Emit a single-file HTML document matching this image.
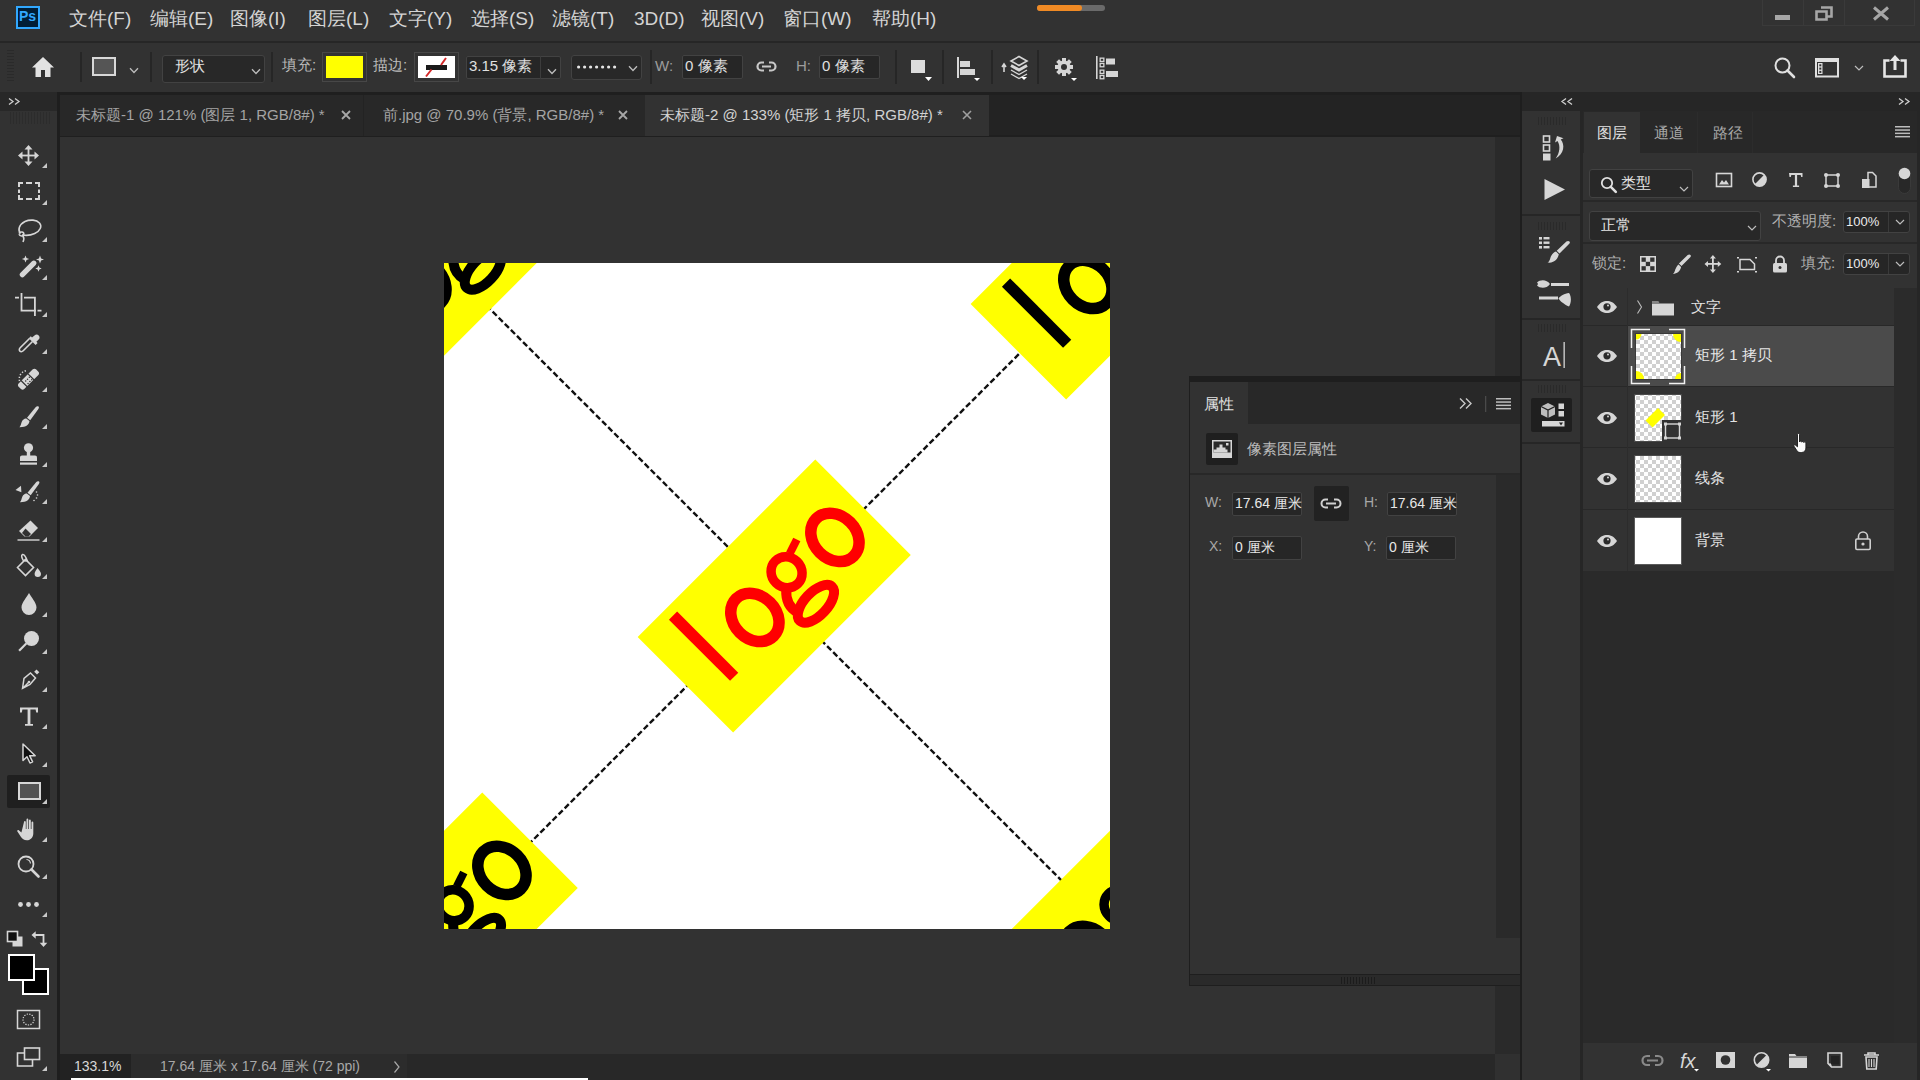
<!DOCTYPE html>
<html><head><meta charset="utf-8">
<style>
*{box-sizing:border-box;margin:0;padding:0}
html,body{width:1920px;height:1080px;overflow:hidden;background:#323232;font-family:"Liberation Sans",sans-serif;color:#d4d4d4}
.a{position:absolute}
.menu{font-size:19px;color:#d4d4d4;top:6px;white-space:nowrap}
.lbl{font-size:15px;color:#b8b8b8;white-space:nowrap}
.fld{background:#262626;border:1px solid #424242;border-radius:2px}
.sep{width:2px;background:#262626}
svg{position:absolute;overflow:visible}
</style></head><body>
<!-- MENU BAR -->
<div class="a" style="left:0;top:0;width:1920px;height:41px;background:#323232"></div>
<div class="a" style="left:0;top:41px;width:1920px;height:2px;background:#262626"></div>
<div class="a" style="left:16px;top:6px;width:24px;height:23px;background:#001e36;border:2px solid #31a8ff"></div>
<div class="a" style="left:19px;top:8px;font-size:14px;font-weight:bold;color:#31a8ff">Ps</div>
<div class="a menu" style="left:69px">文件(F)</div>
<div class="a menu" style="left:150px">编辑(E)</div>
<div class="a menu" style="left:230px">图像(I)</div>
<div class="a menu" style="left:308px">图层(L)</div>
<div class="a menu" style="left:389px">文字(Y)</div>
<div class="a menu" style="left:471px">选择(S)</div>
<div class="a menu" style="left:552px">滤镜(T)</div>
<div class="a menu" style="left:634px;top:8px">3D(D)</div>
<div class="a menu" style="left:701px">视图(V)</div>
<div class="a menu" style="left:783px">窗口(W)</div>
<div class="a menu" style="left:872px">帮助(H)</div>
<div class="a" style="left:1037px;top:5px;width:68px;height:6px;border-radius:3px;background:#6a6a6a"></div>
<div class="a" style="left:1037px;top:5px;width:45px;height:6px;border-radius:3px;background:#f08a24"></div>

<!-- OPTIONS BAR -->
<div class="a" style="left:0;top:43px;width:1920px;height:49px;background:#323232"></div>

<!-- window controls -->
<div class="a" style="left:1762px;top:0;width:153px;height:26px;border:1px solid #3a3a3a;border-top:none"></div>
<div class="a" style="left:1803px;top:0;width:1px;height:26px;background:#3a3a3a"></div>
<div class="a" style="left:1844px;top:0;width:1px;height:26px;background:#3a3a3a"></div>
<div class="a" style="left:1775px;top:15px;width:15px;height:5px;background:#a6a6a6"></div>
<svg style="left:1815px;top:6px" width="18" height="15" viewBox="0 0 18 15"><path d="M6 1.5h10.5v9h-4M1.5 5.5h10v8h-10z" fill="none" stroke="#a6a6a6" stroke-width="2.6"/></svg>
<svg style="left:1873px;top:7px" width="16" height="13" viewBox="0 0 16 13"><path d="M1 0.5L15 12.5M15 0.5L1 12.5" stroke="#a6a6a6" stroke-width="3"/></svg>
<!-- options bar items -->
<svg style="left:7px;top:50px" width="8" height="36" viewBox="0 0 8 36"><g fill="#2a2a2a"><rect x="0" y="0" width="7" height="1"/><rect x="0" y="3" width="7" height="1"/><rect x="0" y="6" width="7" height="1"/><rect x="0" y="9" width="7" height="1"/><rect x="0" y="12" width="7" height="1"/><rect x="0" y="15" width="7" height="1"/><rect x="0" y="18" width="7" height="1"/><rect x="0" y="21" width="7" height="1"/><rect x="0" y="24" width="7" height="1"/><rect x="0" y="27" width="7" height="1"/><rect x="0" y="30" width="7" height="1"/></g></svg>
<svg style="left:31px;top:56px" width="24" height="22" viewBox="0 0 24 22"><path d="M12 1L1 11.5h3.5V21h5.5v-7h4v7h5.5v-9.5H23z" fill="#e2e2e2"/></svg>
<div class="a sep" style="left:80px;top:52px;height:30px"></div>
<div class="a" style="left:92px;top:57px;width:24px;height:19px;border:2px solid #d8d8d8;background:#555"></div>
<svg style="left:129px;top:67px" width="10" height="7" viewBox="0 0 10 7"><path d="M1 1.2L5 5.5L9 1.2" fill="none" stroke="#bdbdbd" stroke-width="1.3"/></svg>
<div class="a sep" style="left:150px;top:52px;height:30px"></div>
<div class="a fld" style="left:162px;top:55px;width:103px;height:28px;border-radius:3px;background:#282828"></div>
<div class="a lbl" style="left:175px;top:57px;color:#e0e0e0">形状</div>
<svg style="left:251px;top:68px" width="10" height="7" viewBox="0 0 10 7"><path d="M1 1.2L5 5.5L9 1.2" fill="none" stroke="#bdbdbd" stroke-width="1.3"/></svg>
<div class="a sep" style="left:271px;top:52px;height:30px"></div>
<div class="a lbl" style="left:282px;top:56px;color:#bcbcbc">填充:</div>
<div class="a" style="left:322px;top:52px;width:45px;height:30px;border:1px solid #474747"></div>
<div class="a" style="left:326px;top:56px;width:37px;height:22px;background:#ffff00"></div>
<div class="a lbl" style="left:373px;top:56px;color:#bcbcbc">描边:</div>
<div class="a" style="left:414px;top:52px;width:45px;height:30px;border:1px solid #474747"></div>
<div class="a" style="left:418px;top:56px;width:37px;height:22px;background:#fff"></div>
<div class="a" style="left:426px;top:65px;width:21px;height:5px;background:#1a1a1a"></div>
<svg style="left:418px;top:56px" width="37" height="22" viewBox="0 0 37 22"><path d="M28 2L23 9M13.5 13.5L8 20.5" stroke="#d32a2a" stroke-width="2"/></svg>
<div class="a fld" style="left:466px;top:56px;width:95px;height:23px;background:#262626"></div>
<div class="a" style="left:540px;top:56px;width:1px;height:23px;background:#3c3c3c"></div>
<div class="a lbl" style="left:469px;top:57px;color:#e0e0e0">3.15 像素</div>
<svg style="left:547px;top:68px" width="10" height="7" viewBox="0 0 10 7"><path d="M1 1.2L5 5.5L9 1.2" fill="none" stroke="#bdbdbd" stroke-width="1.3"/></svg>
<div class="a fld" style="left:571px;top:55px;width:71px;height:25px;border-radius:3px;background:#282828"></div>
<svg style="left:577px;top:65px" width="40" height="4" viewBox="0 0 40 4"><g fill="#e6e6e6"><circle cx="1.6" cy="2" r="1.6"/><circle cx="7.6" cy="2" r="1.6"/><circle cx="13.6" cy="2" r="1.6"/><circle cx="19.6" cy="2" r="1.6"/><circle cx="25.6" cy="2" r="1.6"/><circle cx="31.6" cy="2" r="1.6"/><circle cx="37.6" cy="2" r="1.6"/></g></svg>
<svg style="left:628px;top:65px" width="10" height="7" viewBox="0 0 10 7"><path d="M1 1.2L5 5.5L9 1.2" fill="none" stroke="#bdbdbd" stroke-width="1.3"/></svg>
<div class="a sep" style="left:650px;top:50px;height:34px"></div>
<div class="a lbl" style="left:655px;top:57px;color:#9c9c9c">W:</div>
<div class="a fld" style="left:682px;top:55px;width:61px;height:24px;background:#262626"></div>
<div class="a lbl" style="left:685px;top:57px;color:#e0e0e0">0 像素</div>
<svg style="left:756px;top:60px" width="21" height="13" viewBox="0 0 21 13"><path d="M8 2.5H5.5a4 4 0 0 0 0 8H8M13 2.5h2.5a4 4 0 0 1 0 8H13M6 6.5h9" fill="none" stroke="#c8c8c8" stroke-width="2.2"/></svg>
<div class="a lbl" style="left:796px;top:57px;color:#9c9c9c">H:</div>
<div class="a fld" style="left:819px;top:55px;width:61px;height:24px;background:#262626"></div>
<div class="a lbl" style="left:822px;top:57px;color:#e0e0e0">0 像素</div>
<div class="a sep" style="left:895px;top:50px;height:34px"></div>
<div class="a" style="left:911px;top:60px;width:14px;height:13px;background:#dcdcdc"></div>
<svg style="left:925px;top:77px" width="7" height="4" viewBox="0 0 7 4"><path d="M0 0h7L3.5 4z" fill="#fff"/></svg>
<div class="a sep" style="left:942px;top:50px;height:34px"></div>
<svg style="left:956px;top:56px" width="26" height="26" viewBox="0 0 26 26"><rect x="1" y="1" width="2" height="21" fill="#d6d6d6"/><rect x="4" y="5" width="10" height="6" fill="#d6d6d6"/><rect x="4" y="13" width="15" height="6" fill="#d6d6d6"/><path d="M18 22h6l-3 3z" fill="#fff"/></svg>
<div class="a sep" style="left:991px;top:50px;height:34px"></div>
<svg style="left:1000px;top:55px" width="30" height="26" viewBox="0 0 30 26"><path d="M4 17V10M2 12l2-3 2 3" fill="none" stroke="#d6d6d6" stroke-width="1.6"/><path d="M19 1.5l8 4.5-8 4.5-8-4.5z" fill="none" stroke="#d6d6d6" stroke-width="1.6"/><path d="M11 10.5l8 4.5 8-4.5" fill="none" stroke="#d6d6d6" stroke-width="3"/><path d="M11 15l8 4.5 8-4.5M11 19l8 4.5 8-4.5" fill="none" stroke="#d6d6d6" stroke-width="1.4"/><path d="M21 22h6l-3 3z" fill="#fff"/></svg>
<div class="a sep" style="left:1037px;top:50px;height:34px"></div>
<svg style="left:1054px;top:57px" width="25" height="25" viewBox="0 0 25 25"><g fill="#d6d6d6"><circle cx="10" cy="10" r="6.5"/><rect x="8" y="1" width="4" height="18"/><rect x="1" y="8" width="18" height="4"/><rect x="8" y="1" width="4" height="18" transform="rotate(45 10 10)"/><rect x="8" y="1" width="4" height="18" transform="rotate(-45 10 10)"/></g><circle cx="10" cy="10" r="3" fill="#323232"/><path d="M17 21h6l-3 3z" fill="#fff"/></svg>
<svg style="left:1095px;top:56px" width="24" height="24" viewBox="0 0 24 24"><g fill="#d6d6d6"><rect x="1" y="0" width="1.6" height="23"/><rect x="4.5" y="1.5" width="5" height="4.6"/><rect x="4.5" y="6.8" width="5" height="4.6"/><rect x="4.5" y="13.5" width="5" height="4.6"/><rect x="4.5" y="18.8" width="5" height="4.6"/><rect x="11" y="2.5" width="9" height="6"/><rect x="11" y="15" width="12" height="6"/></g><g fill="#323232"><rect x="5.8" y="2.8" width="2.4" height="2"/><rect x="5.8" y="8.1" width="2.4" height="2"/><rect x="5.8" y="14.8" width="2.4" height="2"/><rect x="5.8" y="20.1" width="2.4" height="2"/></g></svg>
<svg style="left:1774px;top:57px" width="22" height="22" viewBox="0 0 22 22"><circle cx="8.5" cy="8.5" r="7" fill="none" stroke="#e0e0e0" stroke-width="2"/><path d="M13.5 13.5L20 20" stroke="#e0e0e0" stroke-width="2.6" stroke-linecap="round"/></svg>
<svg style="left:1815px;top:58px" width="24" height="20" viewBox="0 0 24 20"><rect x="1" y="1" width="22" height="17.5" fill="none" stroke="#e0e0e0" stroke-width="2"/><rect x="2" y="2" width="20" height="2" fill="#e0e0e0"/><rect x="3" y="5" width="4.5" height="11" fill="#e0e0e0"/><g fill="#323232"><rect x="4.3" y="6.3" width="2" height="2"/><rect x="4.3" y="9.6" width="2" height="2"/><rect x="4.3" y="12.9" width="2" height="2"/></g></svg>
<svg style="left:1854px;top:65px" width="10" height="6" viewBox="0 0 10 6"><path d="M1 1L5 5L9 1" fill="none" stroke="#bdbdbd" stroke-width="1.2"/></svg>
<svg style="left:1883px;top:54px" width="24" height="24" viewBox="0 0 24 24"><path d="M6.5 6.5H1.5v16h21v-16h-5" fill="none" stroke="#e6e6e6" stroke-width="2.6"/><path d="M12 16V4" stroke="#e6e6e6" stroke-width="3"/><path d="M6.5 7L12 1l5.5 6z" fill="#e6e6e6"/></svg>
<!-- LEFT TOOLBAR -->
<div class="a" style="left:0;top:92px;width:57px;height:988px;background:#323232"></div>
<div class="a" style="left:0;top:92px;width:57px;height:19px;background:#282828"></div>
<div class="a" style="left:57px;top:92px;width:3px;height:988px;background:#1e1e1e"></div>

<svg style="left:0;top:0" width="60" height="1080" viewBox="0 0 60 1080">
<g fill="none" stroke="#cfcfcf" stroke-width="1.3"><path d="M9 98.5l4 3-4 3M15 98.5l4 3-4 3"/></g>
<g fill="#2c2c2c"><rect x="10" y="112" width="1" height="12"/><rect x="13" y="112" width="1" height="12"/><rect x="16" y="112" width="1" height="12"/><rect x="19" y="112" width="1" height="12"/><rect x="22" y="112" width="1" height="12"/><rect x="25" y="112" width="1" height="12"/><rect x="28" y="112" width="1" height="12"/><rect x="31" y="112" width="1" height="12"/><rect x="34" y="112" width="1" height="12"/><rect x="37" y="112" width="1" height="12"/><rect x="40" y="112" width="1" height="12"/><rect x="43" y="112" width="1" height="12"/><rect x="46" y="112" width="1" height="12"/><rect x="49" y="112" width="1" height="12"/></g>
<g fill="#d6d6d6" stroke="none">
<!-- move -->
<rect x="21" y="154.6" width="15" height="1.8"/><rect x="27.6" y="148" width="1.8" height="15"/>
<path d="M28.5 145l4 4.5h-8zM28.5 166l4-4.5h-8zM18 155.5l4.5-4v8zM39 155.5l-4.5-4v8z"/>
<!-- marquee -->
<path d="M18 182h5v2h-3v3h-2zM40 182h-5v2h3v3h2zM18 200h5v-2h-3v-3h-2zM40 200h-5v-2h3v-3h2zM26 182h6v2h-6zM26 198h6v2h-6zM18 189.5h2v3.5h-2zM38 189.5h2v3.5h-2z"/>
<!-- wand -->
<path d="M20.5 276.5a2.6 2.6 0 0 1 0-3.7l11.5-11.5a2.6 2.6 0 0 1 3.7 3.7l-11.5 11.5a2.6 2.6 0 0 1-3.7 0z"/>
<path d="M25.5 255.4L26.508 257.992L29.1 259L26.508 260.008L25.5 262.6L24.492 260.008L21.9 259L24.492 257.992zM40 255.5L41.12 258.38L44 259.5L41.12 260.62L40 263.5L38.88 260.62L36 259.5L38.88 258.38zM38.5 265.3L39.396 267.604L41.7 268.5L39.396 269.396L38.5 271.7L37.604 269.396L35.3 268.5L37.604 267.604z"/>
<!-- crop -->
<path d="M20.6 293h1.8v16.8h13.6v1.6h-15.4zM15 296.8h4v1.6h-4zM24 296.8h11.8v19.2h-1.8v-17.6h-10zM37.5 309.8h4v1.6h-4z"/>
<!-- brush -->
<path d="M38.5 406.5c.8.6.3 1.8-.3 2.7l-8 11-3.2-2.4 8.6-10.6c.8-.9 2.1-1.3 2.9-.7z"/>
<path d="M26.3 418.6l3.2 2.4c-.4 3.5-3.3 6.3-10 6.2 1.6-1.6 1.4-3.8 2.4-5.6 1-1.9 2.7-3.4 4.4-3z"/>
<!-- stamp -->
<circle cx="28.5" cy="447.8" r="4.6"/><rect x="26.8" y="450" width="3.4" height="6"/>
<path d="M20 457.5c0-1.2.8-2 2-2h13c1.2 0 2 .8 2 2v3.5h-17z"/><rect x="20" y="462.5" width="17" height="2.2"/>
<!-- history brush -->
<path d="M39 481.5c.8.6.3 1.8-.3 2.7l-8 11-3.2-2.4 8.6-10.6c.8-.9 2.1-1.3 2.9-.7z"/>
<path d="M26.8 493.6l3.2 2.4c-.4 3.5-3.3 6.3-10 6.2 1.6-1.6 1.4-3.8 2.4-5.6 1-1.9 2.7-3.4 4.4-3z"/>
<path d="M15.5 490l5.5-4.2.4 6.5z"/>
<circle cx="36.5" cy="492" r=".8"/><circle cx="37.5" cy="495" r=".8"/><circle cx="36.5" cy="498" r=".8"/><circle cx="34" cy="500.5" r=".8"/>
<!-- eraser -->
<path d="M30.5 520.5l7.5 7.5-8.5 8.5h-5l-5.5-5.5z"/>
<!-- drop -->
<path d="M29 593c2 4 7.5 9.5 7.5 14.5a7.5 7.5 0 0 1-15 0c0-5 5.5-10.5 7.5-14.5z"/>
<!-- dodge -->
<circle cx="31.5" cy="638.5" r="7.5"/>
<!-- path select -->

<!-- hand -->
<path d="M24 822c0-1.2 1.8-1.2 1.8 0v7h.7v-9.5c0-1.2 1.8-1.2 1.8 0v9.5h.7v-8.5c0-1.2 1.8-1.2 1.8 0v8.5h.7v-6.5c0-1.2 1.8-1.2 1.8 0v11c0 3.5-2.5 6.8-6.5 6.8-2.8 0-4.5-1.5-5.8-3.3l-3.6-5.5c-.7-1 .5-2 1.4-1.2l2.6 2.3z"/>
<!-- dots -->
<circle cx="20.5" cy="904.5" r="2.4"/><circle cx="28.5" cy="904.5" r="2.4"/><circle cx="36.5" cy="904.5" r="2.4"/>
</g>
<g fill="none" stroke="#d6d6d6" stroke-width="1.6">
<!-- lasso -->
<path d="M20.5 233.5C17.5 230 19 224.5 25 221.5c5-2.3 11.5-1.8 14.5 1.5 2.8 3.2.8 8-4.8 10.5-4 1.8-9 2.2-12.5 1.3"/>
<path d="M19 233.5c1.3-2.4 5-1.8 4.8.6-.2 2.3-4 2.5-4.8.2M22.8 235.5c1.2 1.8 1.4 4 .2 6.5"/>
<!-- eyedropper -->
<path d="M29.5 338.5l-9.3 9.3c-1.3 1.3-1 2.6-.3 3.3.7.7 2 1 3.3-.3l9.3-9.3"/>
<!-- heal dots -->
<path d="M19.5 381A8.5 8.5 0 0 1 27.5 370.5" stroke-dasharray="1.3 1.7" stroke-width="1.5"/>
<!-- bucket -->
<path d="M17.5 567.5l8-8 8 8-8 8z"/><path d="M24 561.5c-2.5-3.5-3-6.5-1.5-7s3.5 2.5 5 7"/>
<!-- dodge handle -->
<path d="M26.3 643.5l-7.2 7.2" stroke-width="2.2"/>
<!-- pen -->
<path d="M22.5 688.5l1.5-10 6.5-5.5 5 5-5.5 6.5zM22.8 688.2l6.2-6.2" stroke-width="1.5"/>
<!-- zoom -->
<circle cx="26" cy="864" r="7.5" stroke-width="1.8"/><path d="M31.5 869.5l7 7" stroke-width="2.6" stroke-linecap="round"/><path d="M26.5 859.5a4.5 4.5 0 0 1 4 4" stroke-width="1.2"/>
<!-- rect tool -->
<!-- swap arrows -->
<path d="M35 935h8.5v8" stroke-width="1.8"/>
<!-- quick mask -->
<rect x="17.5" y="1010.5" width="22" height="18" stroke-width="1.5"/>
<circle cx="28.5" cy="1019.5" r="5.5" stroke-width="1.2" stroke-dasharray="1.3 1.3"/>
<!-- screen mode -->
<rect x="24.5" y="1048" width="15" height="11.5" stroke-width="1.6"/><path d="M24.5 1053h-7v13h15v-6.5" stroke-width="1.6"/>
</g>
<g fill="#d6d6d6">
<path d="M34.5 335.5c1.2-1.2 3-1.3 4.2-.1 1.2 1.2 1.1 3-.1 4.2l-2.2 2.2 1.2 1.2-2 2-6.8-6.8 2-2 1.2 1.2z"/>
<path d="M38.4 371.7c.9.9.9 2.3 0 3.2l-14.2 14.2c-.9.9-2.3.9-3.2 0l-2.4-2.4c-.9-.9-.9-2.3 0-3.2l14.2-14.2c.9-.9 2.3-.9 3.2 0z"/>
<circle cx="25.5" cy="560.5" r="1.3"/><path d="M37.5 568c1.5 1.8 3.5 4 3.5 5.8a3.2 3.2 0 0 1-6.4 0c0-1.4 1.5-3.8 2.9-5.8z"/>
<path d="M36.5 669.5l2.8 2.8-2.3 2.3-2.8-2.8z"/>
<path d="M20 707.5h18v5h-1.8l-.6-3h-5.2v14.5h2.6v1.8h-8v-1.8h2.6v-14.5h-5.2l-.6 3h-1.8z"/>
<path d="M43.5 947l-3.8-4.2h7.6z"/><path d="M31.5 935l4.2-3.8v7.6z"/>
</g>
<g fill="#323232"><circle cx="25.66" cy="381.04" r="0.75"/><circle cx="28.06" cy="383.44" r="0.75"/><circle cx="27.50" cy="379.20" r="0.75"/><circle cx="29.90" cy="381.60" r="0.75"/><circle cx="29.34" cy="377.36" r="0.75"/><circle cx="31.74" cy="379.76" r="0.75"/>
<path d="M25.5 528.5l5.5 5.5-2.5 2.5h-3l-3.5-3.5z"/><path d="M28.2 373.2l7.4 7.4-.9.9-7.4-7.4zM21.4 380l7.4 7.4-.9.9-7.4-7.4z"/><path d="M28 685.5l.1-.1"/></g>
<path d="M17.5 540h22" stroke="#d6d6d6" stroke-width="1.4"/>
<path d="M19.5 533l3.5 3.5" stroke="#d6d6d6" stroke-width="0"/>
<circle cx="29" cy="682" r="1.3" fill="#d6d6d6"/>
<path d="M23 744v16.5l4-3.8 3 6.3 2.6-1.1-3-6.2h5.6z" fill="#111" stroke="#d6d6d6" stroke-width="1.5" stroke-linejoin="round"/>
<!-- rect tool selected -->
<rect x="7" y="775" width="43" height="33" rx="2" fill="#1f1f1f"/>
<rect x="19" y="783" width="21" height="16" fill="#535353" stroke="#d6d6d6" stroke-width="2"/>
<!-- default colors -->
<rect x="12.5" y="936.5" width="10" height="10" fill="#d6d6d6"/>
<rect x="7.5" y="931.5" width="10" height="10" fill="#111" stroke="#d6d6d6" stroke-width="1.6"/>
<!-- fg/bg -->
<rect x="23" y="969" width="25" height="25" fill="#000" stroke="#fff" stroke-width="2"/>
<rect x="9" y="955" width="25" height="25" fill="#000" stroke="#fff" stroke-width="2"/>
<g fill="#c8c8c8">
<path d="M47 163v5h-5z" fill="#c8c8c8"/><path d="M47 200v5h-5z" fill="#c8c8c8"/><path d="M47 237v5h-5z" fill="#c8c8c8"/><path d="M47 275v5h-5z" fill="#c8c8c8"/><path d="M47 312v5h-5z" fill="#c8c8c8"/><path d="M47 349v5h-5z" fill="#c8c8c8"/><path d="M47 387v5h-5z" fill="#c8c8c8"/><path d="M47 424v5h-5z" fill="#c8c8c8"/><path d="M47 462v5h-5z" fill="#c8c8c8"/><path d="M47 499v5h-5z" fill="#c8c8c8"/><path d="M47 537v5h-5z" fill="#c8c8c8"/><path d="M47 574v5h-5z" fill="#c8c8c8"/><path d="M47 612v5h-5z" fill="#c8c8c8"/><path d="M47 649v5h-5z" fill="#c8c8c8"/><path d="M47 687v5h-5z" fill="#c8c8c8"/><path d="M47 724v5h-5z" fill="#c8c8c8"/><path d="M47 762v5h-5z" fill="#c8c8c8"/><path d="M47 799v5h-5z" fill="#c8c8c8"/><path d="M47 837v5h-5z" fill="#c8c8c8"/><path d="M47 874v5h-5z" fill="#c8c8c8"/><path d="M47 912v5h-5z" fill="#c8c8c8"/><path d="M47 1066v5h-5z" fill="#c8c8c8"/>
</g>
</svg>
<!-- DOCUMENT AREA -->
<div class="a" style="left:60px;top:92px;width:1460px;height:45px;background:#232323;border-top:3px solid #1f1f1f;border-bottom:2px solid #1f1f1f"></div>
<div class="a" style="left:60px;top:95px;width:303px;height:41px;background:#282828"></div>
<div class="a" style="left:363px;top:95px;width:282px;height:41px;background:#282828;border-left:1px solid #232323"></div>
<div class="a" style="left:645px;top:95px;width:344px;height:41px;background:#323232"></div>
<div class="a lbl" style="left:76px;top:106px;color:#a4a4a4">未标题-1 @ 121% (图层 1, RGB/8#) *</div>
<div class="a lbl" style="left:383px;top:106px;color:#a4a4a4">前.jpg @ 70.9% (背景, RGB/8#) *</div>
<div class="a lbl" style="left:660px;top:106px;color:#d2d2d2">未标题-2 @ 133% (矩形 1 拷贝, RGB/8#) *</div>
<svg style="left:341px;top:110px" width="10" height="10" viewBox="0 0 10 10"><path d="M1 1L9 9M9 1L1 9" stroke="#a8a8a8" stroke-width="1.8"/></svg>
<svg style="left:618px;top:110px" width="10" height="10" viewBox="0 0 10 10"><path d="M1 1L9 9M9 1L1 9" stroke="#a8a8a8" stroke-width="1.8"/></svg>
<svg style="left:962px;top:110px" width="10" height="10" viewBox="0 0 10 10"><path d="M1 1L9 9M9 1L1 9" stroke="#a0a0a0" stroke-width="1.6"/></svg>
<div class="a" style="left:60px;top:137px;width:1435px;height:917px;background:#323232"></div>
<div class="a" style="left:1495px;top:137px;width:25px;height:917px;background:#2a2a2a"></div>
<div class="a" style="left:1520px;top:92px;width:2px;height:988px;background:#1e1e1e"></div>

<!-- STATUS BAR -->
<div class="a" style="left:60px;top:1054px;width:1460px;height:26px;background:#282828"></div>
<div class="a" style="left:1495px;top:1054px;width:25px;height:26px;background:#303030"></div>
<div class="a" style="left:60px;top:1054px;width:71px;height:26px;background:#222"></div>
<div class="a" style="left:131px;top:1054px;width:276px;height:26px;background:#2c2c2c"></div>
<div class="a" style="left:74px;top:1058px;font-size:14px;color:#d8d8d8">133.1%</div>
<div class="a" style="left:160px;top:1058px;font-size:14px;color:#a8a8a8;white-space:nowrap">17.64 厘米 x 17.64 厘米 (72 ppi)</div>
<div class="a" style="left:71px;top:1078px;width:517px;height:2px;background:#fff"></div>
<svg style="left:393px;top:1060px" width="8" height="14" viewBox="0 0 8 14"><path d="M1.5 1.5L6 7L1.5 12.5" fill="none" stroke="#a8a8a8" stroke-width="1.2"/></svg>

<!-- CANVAS -->
<svg style="left:444px;top:263px;overflow:hidden" width="666" height="666" viewBox="0 0 666 666">
<defs>
<g id="lg">
<rect x="-125.6" y="-67.5" width="251.2" height="135" fill="#ffff00" stroke="none"/>
<rect x="-91.2" y="-57.7" width="11.6" height="86.5" stroke="none"/>
<ellipse cx="-28.8" cy="1.5" rx="21.5" ry="26.5" fill="none" stroke-width="11.5"/>
<ellipse cx="84.4" cy="1.5" rx="21.5" ry="26.5" fill="none" stroke-width="11.5"/>
<ellipse cx="25.5" cy="-8" rx="15" ry="16" fill="none" stroke-width="9.5"/>
<path d="M41 -19 L56 -24" fill="none" stroke-width="8"/>
<ellipse cx="0" cy="0" rx="23.5" ry="11.5" fill="none" stroke-width="10" transform="translate(24 35) rotate(-2)"/>
<path d="M13 4 Q1 15 5 28" fill="none" stroke-width="10"/>
</g>
</defs>
<rect width="666" height="666" fill="#fff"/>
<path d="M0 0 L666 666 M666 0 L0 666" stroke="#111" stroke-width="2.4" stroke-dasharray="5.8 2.8"/>
<g fill="#ff0000" stroke="#ff0000" transform="translate(330.2 333) rotate(-45)"><use href="#lg"/></g>
<g fill="#000" stroke="#000" transform="translate(-2.8 0) rotate(-45)"><use href="#lg"/></g>
<g fill="#000" stroke="#000" transform="translate(663.2 0) rotate(-45)"><use href="#lg"/></g>
<g fill="#000" stroke="#000" transform="translate(-2.8 666) rotate(-45)"><use href="#lg"/></g>
<g fill="#000" stroke="#000" transform="translate(663.2 666) rotate(-45)"><use href="#lg"/></g>
</svg>

<!-- RIGHT DOCK -->
<div class="a" style="left:1522px;top:92px;width:398px;height:19px;background:#262626"></div>
<svg style="left:1522px;top:92px" width="398" height="19" viewBox="1522 92 398 19"><g fill="none" stroke="#cfcfcf" stroke-width="1.3"><path d="M1566 98.5l-4 3 4 3M1572 98.5l-4 3 4 3M1899 98.5l4 3-4 3M1905 98.5l4 3-4 3"/></g></svg>
<div class="a" style="left:1522px;top:111px;width:58px;height:969px;background:#323232"></div>
<div class="a" style="left:1580px;top:111px;width:3px;height:969px;background:#262626"></div>
<svg style="left:1522px;top:111px" width="58" height="969" viewBox="1522 111 58 969">
<rect x="1522" y="214" width="58" height="2" fill="#262626"/>
<rect x="1522" y="318" width="58" height="2" fill="#262626"/>
<rect x="1522" y="379" width="58" height="2" fill="#262626"/>
<rect x="1522" y="442" width="58" height="2" fill="#262626"/>
<g fill="#2a2a2a"><rect x="1538" y="117" width="1" height="8"/><rect x="1541" y="117" width="1" height="8"/><rect x="1544" y="117" width="1" height="8"/><rect x="1547" y="117" width="1" height="8"/><rect x="1550" y="117" width="1" height="8"/><rect x="1553" y="117" width="1" height="8"/><rect x="1556" y="117" width="1" height="8"/><rect x="1559" y="117" width="1" height="8"/><rect x="1562" y="117" width="1" height="8"/><rect x="1565" y="117" width="1" height="8"/></g><g fill="#2a2a2a"><rect x="1538" y="222" width="1" height="8"/><rect x="1541" y="222" width="1" height="8"/><rect x="1544" y="222" width="1" height="8"/><rect x="1547" y="222" width="1" height="8"/><rect x="1550" y="222" width="1" height="8"/><rect x="1553" y="222" width="1" height="8"/><rect x="1556" y="222" width="1" height="8"/><rect x="1559" y="222" width="1" height="8"/><rect x="1562" y="222" width="1" height="8"/><rect x="1565" y="222" width="1" height="8"/></g><g fill="#2a2a2a"><rect x="1538" y="324" width="1" height="8"/><rect x="1541" y="324" width="1" height="8"/><rect x="1544" y="324" width="1" height="8"/><rect x="1547" y="324" width="1" height="8"/><rect x="1550" y="324" width="1" height="8"/><rect x="1553" y="324" width="1" height="8"/><rect x="1556" y="324" width="1" height="8"/><rect x="1559" y="324" width="1" height="8"/><rect x="1562" y="324" width="1" height="8"/><rect x="1565" y="324" width="1" height="8"/></g><g fill="#2a2a2a"><rect x="1538" y="385" width="1" height="8"/><rect x="1541" y="385" width="1" height="8"/><rect x="1544" y="385" width="1" height="8"/><rect x="1547" y="385" width="1" height="8"/><rect x="1550" y="385" width="1" height="8"/><rect x="1553" y="385" width="1" height="8"/><rect x="1556" y="385" width="1" height="8"/><rect x="1559" y="385" width="1" height="8"/><rect x="1562" y="385" width="1" height="8"/><rect x="1565" y="385" width="1" height="8"/></g>
<g fill="none" stroke="#d6d6d6" stroke-width="1.6"><rect x="1543.5" y="136" width="6" height="6"/><rect x="1543.5" y="145" width="6" height="6"/></g>
<rect x="1543" y="153.5" width="7.5" height="7" fill="#d6d6d6"/>
<path d="M1555 142.5l2-6.5 6.5 2.2-2.8 1.3c4.5 5 3.5 14.5-5 19 4-5.5 5-12.5 1.8-17.5z" fill="#d6d6d6"/>
<path d="M1544.5 179v21l20.5-10.5z" fill="#d6d6d6"/>
<g fill="#d6d6d6"><rect x="1539" y="237" width="3" height="2.6"/><rect x="1539" y="241.5" width="3" height="2.6"/><rect x="1539" y="246" width="3" height="2.6"/><rect x="1543.5" y="237" width="6" height="2.4"/><rect x="1543.5" y="241.5" width="6" height="2.4"/><rect x="1543.5" y="246" width="6" height="2.4"/>
<path d="M1569.5 241.5c.8.8.3 1.8-.5 2.6l-9.5 9.5-2.8-2.8 9.7-9.2c.9-.8 2.3-.9 3.1-.1z"/><path d="M1556 251.5l2.8 2.8c-.8 4.5-4.5 9.2-11.3 8.2 2.8-1.4 2.4-4.6 3.8-6.8 1.1-1.8 2.9-3.9 4.7-4.2z"/>
<path d="M1537 282.5c3-3 9.5-3.5 13 1.5-3.5 5-10 4.5-13 1.5 1.2-.6 1.2-2.4 0-3z"/><rect x="1551" y="283" width="18" height="3"/>
<path d="M1569 293c2.5 3 2.5 10 0 13.5-5-2-9.5-6-10.5-8 1.5-2.5 6-5 10.5-5.5z"/><rect x="1539" y="296.5" width="19" height="3"/></g>
<text x="1543" y="366" font-family="Liberation Sans" font-size="27" fill="#d6d6d6">A</text><rect x="1563.5" y="342" width="1.3" height="26" fill="#d6d6d6"/>
<rect x="1531" y="398" width="41" height="34" rx="2" fill="#1f1f1f"/>
<path d="M1548 403l7 3.5v8l-7 3.5-7-3.5v-8z" fill="#bdbdbd"/><path d="M1541 406.5l7 3.5 7-3.5M1548 410v8" stroke="#1f1f1f" stroke-width="1.2" fill="none"/>
<rect x="1558.5" y="403.5" width="5.5" height="5.5" fill="#d6d6d6"/><rect x="1558.5" y="411" width="5.5" height="5.5" fill="#d6d6d6"/>
<rect x="1542" y="421" width="22.5" height="5.5" fill="#d6d6d6"/><path d="M1559 422.5h4l-2 3z" fill="#1f1f1f"/>
</svg>

<!-- LAYERS PANEL -->
<div class="a" style="left:1583px;top:111px;width:337px;height:969px;background:#323232"></div>
<div class="a" style="left:1583px;top:111px;width:337px;height:42px;background:#282828"></div>
<div class="a" style="left:1584px;top:112px;width:56px;height:41px;background:#323232"></div>
<div class="a" style="left:1697px;top:112px;width:1px;height:41px;background:#2c2c2c"></div>
<div class="a" style="left:1752px;top:112px;width:1px;height:41px;background:#2c2c2c"></div>
<div class="a lbl" style="left:1597px;top:124px;color:#e2e2e2">图层</div>
<div class="a lbl" style="left:1654px;top:124px;color:#a8a8a8">通道</div>
<div class="a lbl" style="left:1713px;top:124px;color:#a8a8a8">路径</div>
<svg style="left:1895px;top:126px" width="16" height="12" viewBox="0 0 16 12"><g fill="#bdbdbd"><rect y="0" width="15" height="1.5"/><rect y="3.3" width="15" height="1.5"/><rect y="6.6" width="15" height="1.5"/><rect y="9.9" width="15" height="1.5"/></g></svg>
<div class="a fld" style="left:1589px;top:169px;width:104px;height:29px;border-radius:3px;background:#282828"></div>
<svg style="left:1600px;top:176px" width="18" height="18" viewBox="0 0 18 18"><circle cx="7" cy="7" r="5.2" fill="none" stroke="#e0e0e0" stroke-width="1.8"/><path d="M10.8 10.8l5 5" stroke="#e0e0e0" stroke-width="2.6" stroke-linecap="round"/></svg>
<div class="a lbl" style="left:1621px;top:174px;color:#e6e6e6">类型</div>
<svg style="left:1679px;top:186px" width="10" height="6" viewBox="0 0 10 6"><path d="M1 1L5 5L9 1" fill="none" stroke="#bdbdbd" stroke-width="1.2"/></svg>
<svg style="left:1714px;top:171px" width="200" height="25" viewBox="1714 171 200 25">
<rect x="1716.5" y="173.5" width="15" height="13" fill="none" stroke="#d6d6d6" stroke-width="1.6"/><path d="M1719 184.5l3-4.5 2 2.5 2-2.5 3 4.5z" fill="#d6d6d6"/>
<circle cx="1759.5" cy="179.5" r="6.6" fill="none" stroke="#d6d6d6" stroke-width="1.6"/><path d="M1764.2 174.8a6.6 6.6 0 0 1-9.4 9.4z" fill="#d6d6d6"/>
<path d="M1789 173h13.5v4h-1.3l-.5-2h-3.6v10.5h2v1.6h-6.2v-1.6h2v-10.5h-3.6l-.5 2h-1.3z" fill="#d6d6d6"/>
<g fill="none" stroke="#d6d6d6" stroke-width="1.5"><rect x="1826" y="175" width="12" height="11"/></g><g fill="#d6d6d6"><circle cx="1826" cy="175" r="2"/><circle cx="1838" cy="175" r="2"/><circle cx="1826" cy="186" r="2"/><circle cx="1838" cy="186" r="2"/></g>
<path d="M1868 172.5h4.5l3.5 3.5v11h-8z" fill="none" stroke="#d6d6d6" stroke-width="1.5"/><rect x="1862" y="179" width="7.5" height="9" fill="#d6d6d6"/>
<rect x="1898.5" y="167.5" width="12" height="26" rx="6" fill="#282828" stroke="#3a3a3a"/><circle cx="1904.5" cy="173.5" r="5.8" fill="#d6d6d6"/>
</svg>
<div class="a" style="left:1583px;top:200px;width:337px;height:2px;background:#282828"></div>
<div class="a fld" style="left:1589px;top:211px;width:172px;height:30px;border-radius:3px;background:#282828"></div>
<div class="a lbl" style="left:1601px;top:216px;color:#e6e6e6">正常</div>
<svg style="left:1747px;top:225px" width="10" height="6" viewBox="0 0 10 6"><path d="M1 1L5 5L9 1" fill="none" stroke="#bdbdbd" stroke-width="1.2"/></svg>
<div class="a lbl" style="left:1772px;top:212px;color:#b0b0b0;font-size:15px">不透明度:</div>
<div class="a fld" style="left:1843px;top:211px;width:67px;height:22px;border-radius:3px;background:#262626"></div>
<div class="a" style="left:1888px;top:212px;width:1px;height:20px;background:#3a3a3a"></div>
<div class="a" style="left:1846px;top:214px;font-size:13px;color:#ececec">100%</div>
<svg style="left:1895px;top:219px" width="10" height="6" viewBox="0 0 10 6"><path d="M1 1L5 5L9 1" fill="none" stroke="#bdbdbd" stroke-width="1.2"/></svg>
<div class="a" style="left:1583px;top:242px;width:337px;height:2px;background:#282828"></div>
<div class="a lbl" style="left:1592px;top:254px;color:#b0b0b0;font-size:15px">锁定:</div>
<svg style="left:1638px;top:252px" width="160" height="24" viewBox="1638 252 160 24">
<rect x="1640" y="256" width="16" height="16" fill="#d6d6d6"/><g fill="#323232"><rect x="1641.5" y="257.5" width="4.3" height="4.3"/><rect x="1650.2" y="257.5" width="4.3" height="4.3"/><rect x="1645.8" y="261.8" width="4.3" height="4.3"/><rect x="1641.5" y="266.2" width="4.3" height="4.3"/><rect x="1650.2" y="266.2" width="4.3" height="4.3"/></g>
<path d="M1690.5 255c.8.8.3 1.8-.5 2.6l-8.5 8.5-2.6-2.6 8.8-8.4c.9-.8 2-.9 2.8-.1z" fill="#d6d6d6"/><path d="M1678.5 264.5l2.6 2.6c-.8 4-4 6.8-8.1 6.8 1.8-1.6 1.8-4 3-6 .9-1.6 1.8-3.2 2.5-3.4z" fill="#d6d6d6"/>
<g fill="#d6d6d6"><rect x="1712" y="258" width="1.8" height="12"/><rect x="1707" y="263" width="12" height="1.8"/><path d="M1712.9 255l3 3.5h-6zM1712.9 273l3-3.5h-6zM1704.5 263.9l3.5-3v6zM1721.3 263.9l-3.5-3v6z"/></g>
<path d="M1740 259.5h10l4.5 4.5v5.5h-14.5z" fill="none" stroke="#d6d6d6" stroke-width="1.5"/><g fill="#d6d6d6"><rect x="1737" y="257" width="2" height="1.5"/><rect x="1755" y="257" width="2" height="1.5"/><rect x="1737" y="271" width="2" height="1.5"/><rect x="1755" y="271" width="2" height="1.5"/></g>
<path d="M1776 263v-2.5a4 4 0 0 1 8 0v2.5" fill="none" stroke="#d6d6d6" stroke-width="1.8"/><rect x="1773" y="263" width="14" height="9.5" rx="1.5" fill="#d6d6d6"/><circle cx="1780" cy="267.5" r="1.5" fill="#323232"/>
</svg>
<div class="a lbl" style="left:1801px;top:254px;color:#b0b0b0;font-size:15px">填充:</div>
<div class="a fld" style="left:1843px;top:253px;width:67px;height:22px;border-radius:3px;background:#262626"></div>
<div class="a" style="left:1888px;top:254px;width:1px;height:20px;background:#3a3a3a"></div>
<div class="a" style="left:1846px;top:256px;font-size:13px;color:#ececec">100%</div>
<svg style="left:1895px;top:261px" width="10" height="6" viewBox="0 0 10 6"><path d="M1 1L5 5L9 1" fill="none" stroke="#bdbdbd" stroke-width="1.2"/></svg>
<!-- layer list -->
<div class="a" style="left:1583px;top:288px;width:311px;height:755px;background:#2a2a2a"></div>
<div class="a" style="left:1894px;top:288px;width:23px;height:755px;background:#2b2b2b"></div>
<div class="a" style="left:1917px;top:111px;width:3px;height:969px;background:#262626"></div>
<div class="a" style="left:1583px;top:288px;width:311px;height:283px;background:#323232"></div>
<div class="a" style="left:1583px;top:325px;width:311px;height:1px;background:#282828"></div>
<div class="a" style="left:1583px;top:386px;width:311px;height:1px;background:#282828"></div>
<div class="a" style="left:1583px;top:447px;width:311px;height:1px;background:#282828"></div>
<div class="a" style="left:1583px;top:509px;width:311px;height:1px;background:#282828"></div>
<div class="a" style="left:1627px;top:288px;width:1px;height:283px;background:#2c2c2c"></div>
<div class="a" style="left:1628px;top:326px;width:266px;height:60px;background:#4b4b4b"></div>
<svg style="left:1596px;top:300px" width="22" height="14" viewBox="0 0 22 14"><path d="M1 7C4 2.5 7.5 1 11 1s7 1.5 10 6c-3 4.5-6.5 6-10 6S4 11.5 1 7z" fill="#d6d6d6"/><circle cx="11" cy="6.8" r="3.6" fill="#2a2a2a"/><circle cx="12" cy="5.6" r="1" fill="#d6d6d6"/></svg><svg style="left:1596px;top:349px" width="22" height="14" viewBox="0 0 22 14"><path d="M1 7C4 2.5 7.5 1 11 1s7 1.5 10 6c-3 4.5-6.5 6-10 6S4 11.5 1 7z" fill="#d6d6d6"/><circle cx="11" cy="6.8" r="3.6" fill="#2a2a2a"/><circle cx="12" cy="5.6" r="1" fill="#d6d6d6"/></svg><svg style="left:1596px;top:411px" width="22" height="14" viewBox="0 0 22 14"><path d="M1 7C4 2.5 7.5 1 11 1s7 1.5 10 6c-3 4.5-6.5 6-10 6S4 11.5 1 7z" fill="#d6d6d6"/><circle cx="11" cy="6.8" r="3.6" fill="#2a2a2a"/><circle cx="12" cy="5.6" r="1" fill="#d6d6d6"/></svg><svg style="left:1596px;top:472px" width="22" height="14" viewBox="0 0 22 14"><path d="M1 7C4 2.5 7.5 1 11 1s7 1.5 10 6c-3 4.5-6.5 6-10 6S4 11.5 1 7z" fill="#d6d6d6"/><circle cx="11" cy="6.8" r="3.6" fill="#2a2a2a"/><circle cx="12" cy="5.6" r="1" fill="#d6d6d6"/></svg><svg style="left:1596px;top:534px" width="22" height="14" viewBox="0 0 22 14"><path d="M1 7C4 2.5 7.5 1 11 1s7 1.5 10 6c-3 4.5-6.5 6-10 6S4 11.5 1 7z" fill="#d6d6d6"/><circle cx="11" cy="6.8" r="3.6" fill="#2a2a2a"/><circle cx="12" cy="5.6" r="1" fill="#d6d6d6"/></svg>
<svg style="left:1636px;top:299px" width="40" height="18" viewBox="0 0 40 18"><path d="M1.5 1.5L5.5 8L1.5 14.5" fill="none" stroke="#bdbdbd" stroke-width="1.1"/><path d="M16 2.5h6.5l1 1.5H38v12.5H16z" fill="#d6d6d6"/><rect x="16" y="3.5" width="22" height="1" fill="#323232"/></svg>
<div class="a lbl" style="left:1691px;top:298px;color:#e2e2e2">文字</div>
<svg style="left:1630px;top:328px" width="250" height="240" viewBox="1630 328 250 240">
<defs><pattern id="chk" width="8" height="8" patternUnits="userSpaceOnUse"><rect width="8" height="8" fill="#fff"/><rect width="4" height="4" fill="#d0d0d0"/><rect x="4" y="4" width="4" height="4" fill="#d0d0d0"/></pattern></defs>
<path d="M1631.5 348V329.5H1650M1669 329.5H1684.5V348M1684.5 366V383.5H1669M1650 383.5H1631.5V366" fill="none" stroke="#f2f2f2" stroke-width="1.5"/>
<rect x="1635.5" y="333.5" width="46" height="46" fill="url(#chk)" stroke="#3a3a3a"/>
<path d="M1636 334h5.5a5.5 5.5 0 0 1-5.5 5.5z" fill="#ffff00"/><path d="M1681 334h-8a8 8 0 0 0 8 8z" fill="#ffff00"/><path d="M1636 379v-8a8 8 0 0 1 8 8z" fill="#ffff00"/><path d="M1681 379h-6a6 6 0 0 1 6-6z" fill="#ffff00"/>
<rect x="1634.5" y="394.5" width="47" height="47" fill="url(#chk)" stroke="#4a4a4a"/>
<path d="M1645.5 420.5l12.5-12.5 7 7-12.5 12.5z" fill="#ffff00"/>
<rect x="1662" y="420" width="20" height="22" fill="#323232"/>
<rect x="1665.5" y="424" width="14" height="14" fill="none" stroke="#d6d6d6" stroke-width="1.4"/><g fill="#d6d6d6"><rect x="1664" y="422.5" width="3" height="3"/><rect x="1678" y="422.5" width="3" height="3"/><rect x="1664" y="436.5" width="3" height="3"/><rect x="1678" y="436.5" width="3" height="3"/></g>
<rect x="1634.5" y="455.5" width="47" height="47" fill="url(#chk)" stroke="#4a4a4a"/>
<rect x="1634.5" y="517.5" width="47" height="47" fill="#fff" stroke="#5a5a5a"/>
</svg>
<div class="a lbl" style="left:1695px;top:346px;color:#e6e6e6">矩形 1 拷贝</div>
<div class="a lbl" style="left:1695px;top:408px;color:#e2e2e2">矩形 1</div>
<div class="a lbl" style="left:1695px;top:469px;color:#e2e2e2">线条</div>
<div class="a lbl" style="left:1695px;top:531px;color:#e2e2e2">背景</div>
<svg style="left:1854px;top:531px" width="18" height="20" viewBox="0 0 18 20"><path d="M4.5 8V5.5a4.5 4.5 0 0 1 9 0V8" fill="none" stroke="#cfcfcf" stroke-width="1.6"/><rect x="1.8" y="8" width="14.4" height="10.5" rx="1.2" fill="none" stroke="#cfcfcf" stroke-width="1.6"/><circle cx="9" cy="13" r="1.6" fill="#cfcfcf"/></svg>
<svg style="left:1792px;top:433px" width="18" height="20" viewBox="0 0 18 20"><path d="M5.5 1.5c0-1.3 2-1.3 2 0v7.5c.3-1.2 2.2-1.2 2.2.2.3-1.1 2.1-1 2.1.3.4-1 2.1-.8 2.1.5v5c0 2.6-1.8 4.5-4.4 4.5H8.3c-1.6 0-2.7-.7-3.5-2L2 13.2c-.6-.9.4-1.9 1.3-1.2l2.2 1.8z" fill="#fafafa" stroke="#1a1a1a" stroke-width="0.9"/></svg>
<!-- footer -->
<div class="a" style="left:1583px;top:1043px;width:334px;height:37px;background:#323232"></div>
<svg style="left:1640px;top:1048px" width="250" height="28" viewBox="1640 1048 250 28">
<path d="M1650 1056h-3a4.5 4.5 0 0 0 0 9h3M1655 1056h3a4.5 4.5 0 0 1 0 9h-3M1647 1060.5h11" fill="none" stroke="#8a8a8a" stroke-width="2.2"/>
<text x="1680" y="1068" font-family="Liberation Sans" font-style="italic" font-size="20" fill="#d6d6d6">fx</text><path d="M1694 1069h5l-2.5 2.5z" fill="#fff"/>
<rect x="1716" y="1052" width="19" height="16" fill="#d6d6d6"/><circle cx="1725.5" cy="1060" r="4.8" fill="#323232"/>
<circle cx="1761.5" cy="1060" r="7.2" fill="none" stroke="#d6d6d6" stroke-width="1.6"/><path d="M1766.6 1054.9a7.2 7.2 0 0 1-10.2 10.2z" fill="#d6d6d6"/><path d="M1766 1069h5l-2.5 2.5z" fill="#fff"/>
<path d="M1789 1054h6l1.5 2h10.5v12h-18z" fill="#d6d6d6"/><rect x="1789" y="1056.5" width="18" height="1" fill="#323232"/>
<path d="M1828 1053h13.5v14h-10l-3.5-3.5z" fill="none" stroke="#d6d6d6" stroke-width="1.6"/><path d="M1828 1063.5h3.5v3.5z" fill="#d6d6d6"/><rect x="1831" y="1056" width="8.5" height="8.5" fill="#222"/>
<path d="M1864 1055h15M1868 1055v-2h7v2" fill="none" stroke="#d6d6d6" stroke-width="1.6"/><path d="M1866 1057h11l-.8 12h-9.4z" fill="none" stroke="#d6d6d6" stroke-width="1.6"/><path d="M1869 1059v8M1871.5 1059v8M1874 1059v8" stroke="#d6d6d6" stroke-width="1.1"/>
</svg>

<!-- PROPERTIES PANEL -->
<div class="a" style="left:1189px;top:376px;width:332px;height:610px;background:#1e1e1e"></div>
<div class="a" style="left:1190px;top:382px;width:330px;height:592px;background:#323232"></div>
<div class="a" style="left:1190px;top:382px;width:330px;height:42px;background:#282828"></div>
<div class="a" style="left:1190px;top:382px;width:58px;height:42px;background:#323232"></div>
<div class="a lbl" style="left:1204px;top:395px;color:#e2e2e2">属性</div>
<svg style="left:1458px;top:395px" width="60" height="18" viewBox="0 0 60 18"><path d="M2 3.5l5 5-5 5M8 3.5l5 5-5 5" fill="none" stroke="#c8c8c8" stroke-width="1.4"/><rect x="27" y="1" width="1.3" height="16" fill="#4a4a4a"/><g fill="#bdbdbd"><rect x="38" y="3" width="15" height="1.5"/><rect x="38" y="6.3" width="15" height="1.5"/><rect x="38" y="9.6" width="15" height="1.5"/><rect x="38" y="12.9" width="15" height="1.5"/></g></svg>
<div class="a" style="left:1206px;top:433px;width:32px;height:32px;border-radius:2px;background:#1f1f1f"></div>
<svg style="left:1211px;top:439px" width="22" height="20" viewBox="0 0 22 20"><rect x="1" y="1" width="20" height="18" fill="#d6d6d6"/><rect x="2.5" y="2.5" width="17" height="11" fill="#2a2a2a"/><path d="M2.5 13.5v-3h3v-2h3v-3h3v3h3v2h2v3z" fill="#d6d6d6"/><rect x="15" y="4" width="2.5" height="2.5" fill="#d6d6d6"/></svg>
<div class="a lbl" style="left:1247px;top:440px;color:#bdbdbd">像素图层属性</div>
<div class="a" style="left:1190px;top:473px;width:330px;height:2px;background:#282828"></div>
<div class="a" style="left:1496px;top:475px;width:24px;height:463px;background:#2a2a2a"></div>
<div class="a lbl" style="left:1205px;top:494px;color:#a8a8a8;font-size:14px">W:</div>
<div class="a fld" style="left:1232px;top:492px;width:70px;height:24px;background:#262626"></div>
<div class="a" style="left:1235px;top:495px;font-size:14px;color:#e8e8e8;white-space:nowrap">17.64 厘米</div>
<div class="a" style="left:1314px;top:486px;width:35px;height:35px;border-radius:2px;background:#222"></div>
<svg style="left:1320px;top:497px" width="22" height="13" viewBox="0 0 22 13"><path d="M8 2.5H5.5a4 4 0 0 0 0 8H8M14 2.5h2.5a4 4 0 0 1 0 8H14M6 6.5h10" fill="none" stroke="#d0d0d0" stroke-width="2"/></svg>
<div class="a lbl" style="left:1364px;top:494px;color:#a8a8a8;font-size:14px">H:</div>
<div class="a fld" style="left:1387px;top:492px;width:70px;height:24px;background:#262626"></div>
<div class="a" style="left:1390px;top:495px;font-size:14px;color:#e8e8e8;white-space:nowrap">17.64 厘米</div>
<div class="a lbl" style="left:1209px;top:538px;color:#a8a8a8;font-size:14px">X:</div>
<div class="a fld" style="left:1232px;top:536px;width:70px;height:24px;background:#262626"></div>
<div class="a" style="left:1235px;top:539px;font-size:14px;color:#e8e8e8;white-space:nowrap">0 厘米</div>
<div class="a lbl" style="left:1364px;top:538px;color:#a8a8a8;font-size:14px">Y:</div>
<div class="a fld" style="left:1386px;top:536px;width:70px;height:24px;background:#262626"></div>
<div class="a" style="left:1389px;top:539px;font-size:14px;color:#e8e8e8;white-space:nowrap">0 厘米</div>
<div class="a" style="left:1190px;top:975px;width:330px;height:10px;background:#2a2a2a"></div>
<svg style="left:1340px;top:977px" width="40" height="7" viewBox="0 0 40 7"><g fill="#1c1c1c"><rect x="1" y="0" width="1" height="7"/><rect x="4" y="0" width="1" height="7"/><rect x="7" y="0" width="1" height="7"/><rect x="10" y="0" width="1" height="7"/><rect x="13" y="0" width="1" height="7"/><rect x="16" y="0" width="1" height="7"/><rect x="19" y="0" width="1" height="7"/><rect x="22" y="0" width="1" height="7"/><rect x="25" y="0" width="1" height="7"/><rect x="28" y="0" width="1" height="7"/><rect x="31" y="0" width="1" height="7"/><rect x="34" y="0" width="1" height="7"/></g></svg>
</body></html>
